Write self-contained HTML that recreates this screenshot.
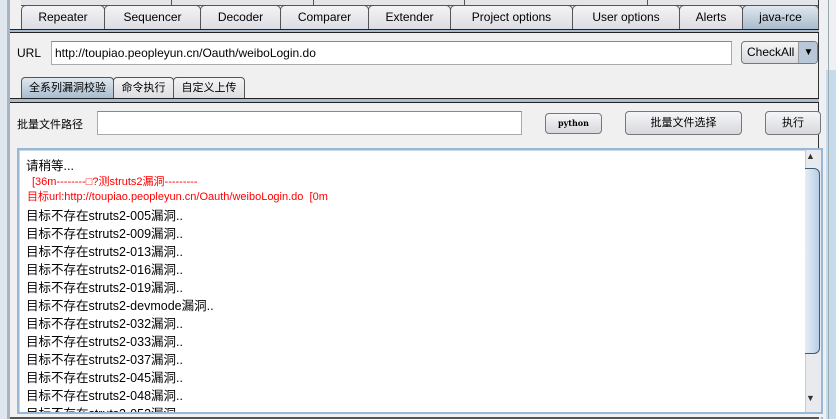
<!DOCTYPE html>
<html style="overflow:hidden;width:836px;height:419px"><head><meta charset="utf-8"><style>
*{margin:0;padding:0;box-sizing:border-box}
body{width:836px;height:419px;overflow:hidden;background:#f0f0f0;font-family:"Liberation Sans","Noto Sans CJK SC",sans-serif;font-size:12px;color:#000;position:relative}
.a{position:absolute}
.tab{position:absolute;top:5px;height:24px;border:1px solid #555;border-bottom:none;border-radius:5px 5px 0 0;background:linear-gradient(#f4f4f6,#dcdde2);text-align:center;line-height:23px;font-size:12px}
.stab{position:absolute;top:77px;height:21px;border:1px solid #555;border-bottom:none;border-radius:4px 4px 0 0;background:linear-gradient(#f4f4f6,#dcdde2);text-align:center;line-height:20px;font-size:11px}
.sel{background:linear-gradient(#dfe7ef,#a9bccd)}
.btn{position:absolute;border:1px solid #777;border-radius:4px;background:linear-gradient(#f6f6f8,#d6d8dd);text-align:center;font-size:11px}
.inp{position:absolute;background:#fff;border:1px solid #aaa;border-top-color:#888}
.ln{position:absolute;left:26px;font-size:12.5px;white-space:nowrap}
.r{color:#f00;font-size:11px}
</style></head><body>
<div class="a" style="left:0;top:0;width:7px;height:419px;background:#dfe6ee"></div>
<div class="a" style="left:7px;top:0;width:3px;height:419px;background:#a9b4c0"></div>
<div class="a" style="left:819px;top:0;width:17px;height:419px;background:#eef0f3"></div>
<div class="a" style="left:826px;top:70px;width:10px;height:349px;background:#c7dbee"></div>
<div class="a" style="left:828px;top:0;width:1px;height:419px;background:#9aa"></div>
<div class="a" style="left:10px;top:0;width:809px;height:419px;background:#f0f0f0;border-right:1px solid #333"></div>
<div class="a" style="left:21px;top:0;width:797px;height:6px;background:#e4e5e9;border-bottom:1px solid #555"></div>
<div class="a" style="left:171px;top:0;width:1px;height:6px;background:#555"></div>
<div class="a" style="left:313px;top:0;width:1px;height:6px;background:#555"></div>
<div class="a" style="left:464px;top:0;width:1px;height:6px;background:#555"></div>
<div class="a" style="left:647px;top:0;width:1px;height:6px;background:#555"></div>
<div class="tab" style="left:21px;width:84px">Repeater</div>
<div class="tab" style="left:104px;width:97px">Sequencer</div>
<div class="tab" style="left:200px;width:81px">Decoder</div>
<div class="tab" style="left:280px;width:89px">Comparer</div>
<div class="tab" style="left:368px;width:83px">Extender</div>
<div class="tab" style="left:450px;width:123px">Project options</div>
<div class="tab" style="left:572px;width:108px">User options</div>
<div class="tab" style="left:679px;width:64px">Alerts</div>
<div class="tab sel" style="left:742px;width:77px">java-rce</div>
<div class="a" style="left:10px;top:29px;width:809px;height:4px;background:#a9bccd;border-top:1px solid #222;border-bottom:1px solid #222"></div>
<div class="a" style="left:17px;top:46px;font-size:12px">URL</div>
<div class="inp" style="left:51px;top:41px;width:681px;height:24px"></div>
<div class="a" style="left:55px;top:46px;font-size:12px">http://toupiao.peopleyun.cn/Oauth/weiboLogin.do</div>
<div class="btn" style="left:741px;top:41px;width:77px;height:23px;overflow:hidden"><span class="a" style="left:5px;top:3px;font-size:12px">CheckAll</span><span class="a" style="left:56px;top:0;width:20px;height:21px;border-left:1px solid #999;background:#b8c8d8;text-align:center;font-size:10px;line-height:21px">▼</span></div>
<div class="stab sel" style="left:21px;width:93px">全系列漏洞校验</div>
<div class="stab" style="left:113px;width:61px">命令执行</div>
<div class="stab" style="left:173px;width:72px">自定义上传</div>
<div class="a" style="left:10px;top:98px;width:809px;height:5px;border-top:1px solid #222;border-bottom:1px solid #222;background:#a9bccd"></div>
<div class="a" style="left:17px;top:116px;font-size:11px">批量文件路径</div>
<div class="inp" style="left:97px;top:111px;width:425px;height:24px"></div>
<div class="btn" style="left:545px;top:113px;width:57px;height:21px;line-height:19px;font-family:'DejaVu Serif',serif;font-size:8px;font-weight:bold">python</div>
<div class="btn" style="left:625px;top:111px;width:117px;height:24px;line-height:22px">批量文件选择</div>
<div class="btn" style="left:765px;top:111px;width:56px;height:24px;line-height:22px">执行</div>
<div class="a" style="left:17px;top:148px;width:806px;height:271px;border:2px solid #98b8d8;border-bottom:none;background:#fff;box-shadow:inset 0 0 0 1px #c8d8e8"></div>
<div class="a" style="left:805px;top:150px;width:16px;height:269px;background:#e8eaee;border-left:1px solid #ccc"></div>
<div class="a" style="left:805px;top:168px;width:15px;height:186px;border:1px solid #3c5a78;border-left:none;border-radius:0 6px 6px 0;background:linear-gradient(90deg,#e6eef6,#b8cfe6)"></div>
<div class="a" style="left:806px;top:151px;font-size:9px;color:#333">▲</div>
<div class="a" style="left:806px;top:393px;font-size:9px;color:#333">▼</div>
<div class="ln" style="top:155px">请稍等...</div>
<div class="ln r" style="top:173px;left:32px">[36m--------□?测struts2漏洞---------</div>
<div class="ln r" style="top:188px;left:27px">目标url:http://toupiao.peopleyun.cn/Oauth/weiboLogin.do&nbsp;&nbsp;[0m</div>
<div class="ln" style="top:205px">目标不存在struts2-005漏洞..</div>
<div class="ln" style="top:223px">目标不存在struts2-009漏洞..</div>
<div class="ln" style="top:241px">目标不存在struts2-013漏洞..</div>
<div class="ln" style="top:259px">目标不存在struts2-016漏洞..</div>
<div class="ln" style="top:277px">目标不存在struts2-019漏洞..</div>
<div class="ln" style="top:295px">目标不存在struts2-devmode漏洞..</div>
<div class="ln" style="top:313px">目标不存在struts2-032漏洞..</div>
<div class="ln" style="top:331px">目标不存在struts2-033漏洞..</div>
<div class="ln" style="top:349px">目标不存在struts2-037漏洞..</div>
<div class="ln" style="top:367px">目标不存在struts2-045漏洞..</div>
<div class="ln" style="top:385px">目标不存在struts2-048漏洞..</div>
<div class="ln" style="top:403px;height:9px;overflow:hidden">目标不存在struts2-052漏洞..</div>
<div class="a" style="left:17px;top:412px;width:806px;height:5px;background:#f0f0f0;border-top:2px solid #98b8d8"></div>
<div class="a" style="left:10px;top:417px;width:809px;height:2px;background:#555"></div>
</body></html>
